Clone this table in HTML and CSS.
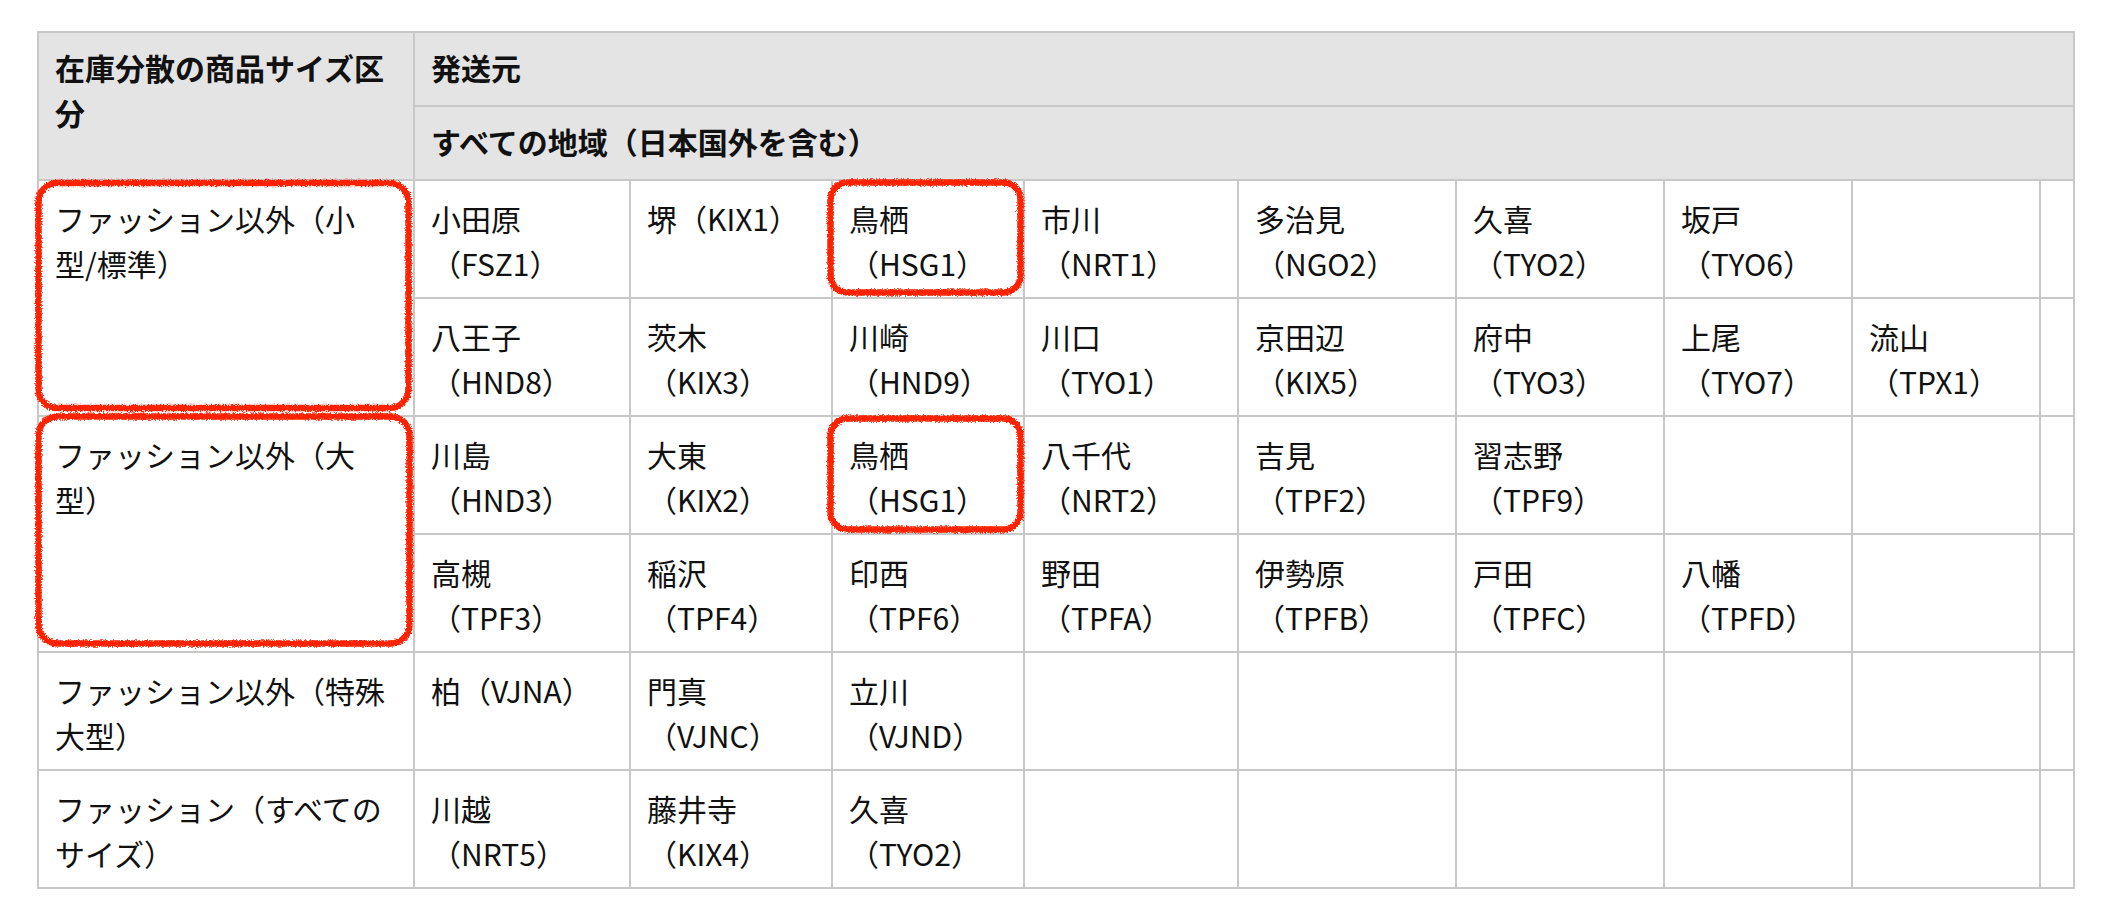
FILE: index.html
```html
<!DOCTYPE html>
<html lang="ja">
<head>
<meta charset="utf-8">
<title>在庫分散</title>
<link rel="stylesheet" href="styles.css">
</head>
<body>
<div class="page">
  <table class="grid">
    <colgroup>
      <col class="c-head">
      <col class="c1"><col class="c2"><col class="c3"><col class="c4"><col class="c5"><col class="c6"><col class="c7"><col class="c8"><col class="c9">
    </colgroup>
    <thead>
      <tr>
        <th rowspan="2" class="first">在庫分散の商品サイズ区分</th>
        <th colspan="9">発送元</th>
      </tr>
      <tr>
        <th colspan="9">すべての地域（日本国外を含む）</th>
      </tr>
    </thead>
    <tbody>
      <tr>
        <td rowspan="2" class="first">ファッション以外（小型/標準）</td>
        <td>小田原（FSZ1）</td><td>堺（KIX1）</td><td>鳥栖（HSG1）</td><td>市川（NRT1）</td><td>多治見（NGO2）</td><td>久喜（TYO2）</td><td>坂戸（TYO6）</td><td></td><td></td>
      </tr>
      <tr>
        <td>八王子（HND8）</td><td>茨木（KIX3）</td><td>川崎（HND9）</td><td>川口（TYO1）</td><td>京田辺（KIX5）</td><td>府中（TYO3）</td><td>上尾（TYO7）</td><td>流山（TPX1）</td><td></td>
      </tr>
      <tr>
        <td rowspan="2" class="first">ファッション以外（大型）</td>
        <td>川島（HND3）</td><td>大東（KIX2）</td><td>鳥栖（HSG1）</td><td>八千代（NRT2）</td><td>吉見（TPF2）</td><td>習志野（TPF9）</td><td></td><td></td><td></td>
      </tr>
      <tr>
        <td>高槻（TPF3）</td><td>稲沢（TPF4）</td><td>印西（TPF6）</td><td>野田（TPFA）</td><td>伊勢原（TPFB）</td><td>戸田（TPFC）</td><td>八幡（TPFD）</td><td></td><td></td>
      </tr>
      <tr>
        <td class="first">ファッション以外（特殊大型）</td>
        <td>柏（VJNA）</td><td>門真（VJNC）</td><td>立川（VJND）</td><td></td><td></td><td></td><td></td><td></td><td></td>
      </tr>
      <tr>
        <td class="first">ファッション（すべてのサイズ）</td>
        <td>川越（NRT5）</td><td>藤井寺（KIX4）</td><td>久喜（TYO2）</td><td></td><td></td><td></td><td></td><td></td><td></td>
      </tr>
    </tbody>
  </table>

  <svg class="marks" width="2106" height="918" viewBox="0 0 2106 918" aria-hidden="true">
    <defs>
      <filter id="rough" x="-10%" y="-10%" width="120%" height="120%">
        <feTurbulence type="fractalNoise" baseFrequency="1.4" numOctaves="2" seed="7" result="noise"/>
        <feDisplacementMap in="SourceGraphic" in2="noise" scale="4.5" xChannelSelector="R" yChannelSelector="G"/>
      </filter>
    </defs>
    <g class="mark-group" filter="url(#rough)">
      <rect x="38.5" y="183" width="370" height="225" rx="19" ry="19"/>
      <rect x="38.5" y="416.5" width="371" height="227" rx="19" ry="19"/>
      <rect x="830.5" y="182.5" width="190" height="110" rx="17" ry="17"/>
      <rect x="830.5" y="418.5" width="190" height="111" rx="17" ry="17"/>
    </g>
  </svg>
</div>
</body>
</html>
```
FILE: styles.css
```css
html, body {
  margin: 0;
  padding: 0;
  background: #ffffff;
}

.page {
  position: relative;
  width: 2106px;
  height: 918px;
  padding: 31px 0 0 37px;
  box-sizing: border-box;
  font-family: "Noto Sans CJK JP", "Noto Sans", sans-serif;
  color: #111111;
}

.grid {
  border-collapse: collapse;
  table-layout: fixed;
  width: 2036px;
  font-size: 30px;
  line-height: 45px;
  text-spacing-trim: space-all;
}

.c-head { width: 376px; }
.c1 { width: 216px; }
.c2 { width: 202px; }
.c3 { width: 192px; }
.c4 { width: 214px; }
.c5 { width: 218px; }
.c6 { width: 208px; }
.c7 { width: 188px; }
.c8 { width: 188px; }
.c9 { width: 34px; }

.grid th,
.grid td {
  border: 2px solid #c8c8c8;
  padding: 15px 16px 11px;
  vertical-align: top;
  text-align: left;
}

.grid th {
  background: #e4e4e4;
  font-weight: 700;
  padding-top: 12px;
  padding-bottom: 15px;
}

.grid td {
  font-weight: 400;
  background: #ffffff;
}

.grid .first {
  padding-right: 20px;
}

.marks {
  position: absolute;
  left: 0;
  top: 0;
  pointer-events: none;
}

.mark-group rect {
  fill: none;
  stroke: #ff2200;
  stroke-width: 6.5;
}
```
